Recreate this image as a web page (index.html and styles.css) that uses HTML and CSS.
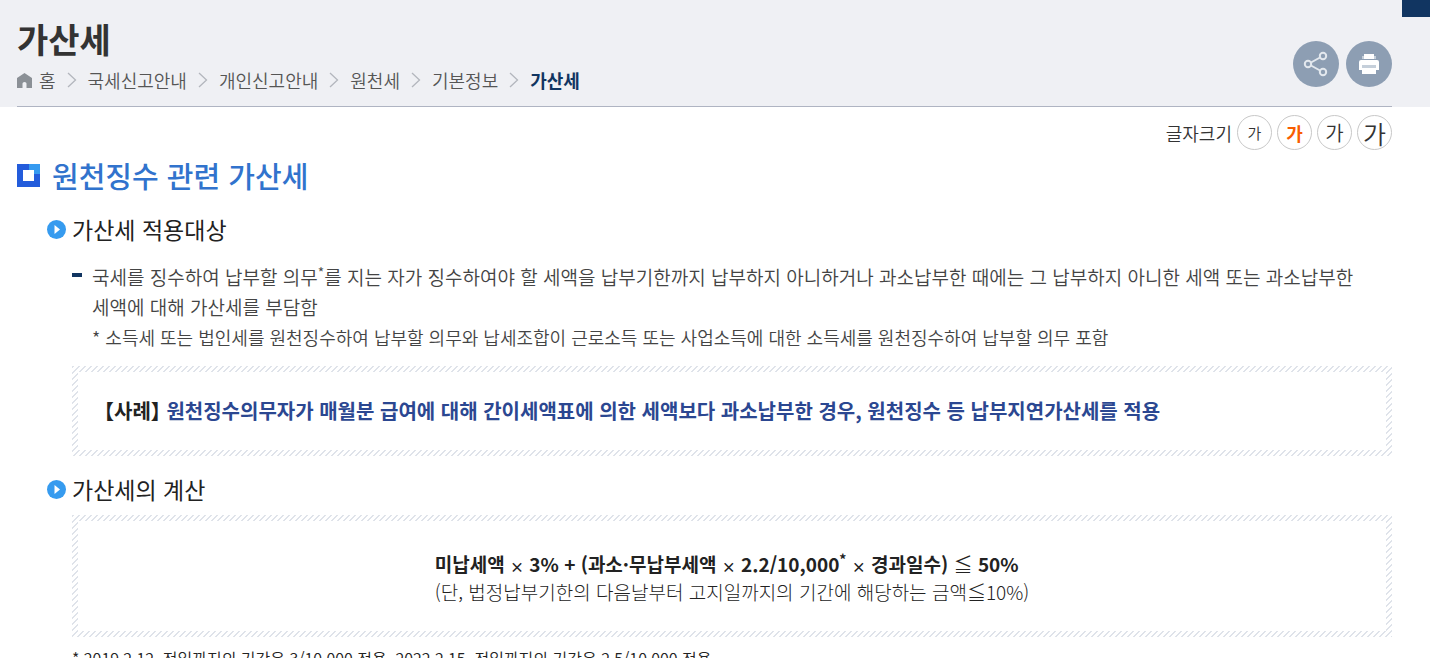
FILE: index.html
```
<!DOCTYPE html>
<html lang="ko">
<head>
<meta charset="utf-8">
<title>가산세</title>
<link rel="stylesheet" href="styles.css">
</head>
<body>
<header class="page-head">
  <div class="head-inner">
    <div class="head-text">
      <h1 class="page-title">가산세</h1>
      <nav class="crumbs" aria-label="현재 위치">
        <svg class="home" width="15" height="15" viewBox="0 0 15 15" aria-hidden="true"><path fill="#8b9096" d="M7.500 0 15 5v10H9.500v-4.500Q9.500 9 7.500 9T5.500 10.500V15H0V5z"/></svg>
        <a href="#">홈</a>
        <svg class="sep" width="10" height="16" viewBox="0 0 10 16" aria-hidden="true"><path d="M1 1l7.500 7L1 15"/></svg>
        <a href="#">국세신고안내</a>
        <svg class="sep" width="10" height="16" viewBox="0 0 10 16" aria-hidden="true"><path d="M1 1l7.500 7L1 15"/></svg>
        <a href="#">개인신고안내</a>
        <svg class="sep" width="10" height="16" viewBox="0 0 10 16" aria-hidden="true"><path d="M1 1l7.500 7L1 15"/></svg>
        <a href="#">원천세</a>
        <svg class="sep" width="10" height="16" viewBox="0 0 10 16" aria-hidden="true"><path d="M1 1l7.500 7L1 15"/></svg>
        <a href="#">기본정보</a>
        <svg class="sep" width="10" height="16" viewBox="0 0 10 16" aria-hidden="true"><path d="M1 1l7.500 7L1 15"/></svg>
        <a href="#" class="current" aria-current="page">가산세</a>
      </nav>
    </div>
    <div class="tools">
      <button class="tool" type="button" aria-label="공유">
        <svg width="46" height="46" viewBox="0 0 46 46" fill="none" stroke="#e3e8ee"><path stroke-width="2" d="M18 21.500l9-5M18 24.500l9 5"/><circle cx="15" cy="23" r="3.200" stroke-width="2"/><circle cx="30" cy="15" r="3.200" stroke-width="2"/><circle cx="30" cy="31" r="3.200" stroke-width="2"/></svg>
      </button>
      <button class="tool" type="button" aria-label="인쇄">
        <svg width="46" height="46" viewBox="0 0 46 46"><path fill="#fff" d="M18 13h10v5H18z"/><path fill="#fff" d="M15 19h16q2 0 2 2v8h-3v-5H16v5h-3v-8q0-2 2-2z"/><path fill="#c5cfda" d="M16 24h14v3H16zM16 15h2v3h-2zM28 15h2v3h-2z"/><path fill="#fff" d="M16 27h14v6H16z"/></svg>
      </button>
    </div>
  </div>
  <div class="corner"></div>
</header>
<main class="content">
  <div class="sizes" role="group" aria-labelledby="size-label">
    <span id="size-label">글자크기</span>
    <button type="button" class="size small">가</button>
    <button type="button" class="size active" aria-pressed="true">가</button>
    <button type="button" class="size large">가</button>
    <button type="button" class="size huge">가</button>
  </div>
  <h2 class="section-title">
    <svg width="23" height="23" viewBox="0 0 23 23" aria-hidden="true"><path fill="#235cdb" d="M0 0h23v23H0z"/><path fill="#359af0" d="M12 0h11v10H12z"/><path fill="#fff" d="M6 6h11v11H6z"/></svg>
    <span>원천징수 관련 가산세</span>
  </h2>
  <section class="part">
    <h3 class="part-title"><svg width="19" height="19" viewBox="0 0 19 19" aria-hidden="true"><circle cx="9.500" cy="9.500" r="9.500" fill="#369bef"/><path fill="#fff" d="M7.500 5l5.500 4.500-5.500 4.500z"/></svg>가산세 적용대상</h3>
    <div class="part-body">
      <ul class="dashes">
        <li>국세를 징수하여 납부할 의무<sup>*</sup>를 지는 자가 징수하여야 할 세액을 납부기한까지 납부하지 아니하거나 과소납부한 때에는 그 납부하지 아니한 세액 또는 과소납부한 세액에 대해 가산세를 부담함
          <p class="note">* 소득세 또는 법인세를 원천징수하여 납부할 의무와 납세조합이 근로소득 또는 사업소득에 대한 소득세를 원천징수하여 납부할 의무 포함</p>
        </li>
      </ul>
      <div class="frame"><p class="case"><span class="tag">【사례】</span> 원천징수의무자가 매월분 급여에 대해 간이세액표에 의한 세액보다 과소납부한 경우, 원천징수 등 납부지연가산세를 적용</p></div>
    </div>
  </section>
  <section class="part">
    <h3 class="part-title"><svg width="19" height="19" viewBox="0 0 19 19" aria-hidden="true"><circle cx="9.500" cy="9.500" r="9.500" fill="#369bef"/><path fill="#fff" d="M7.500 5l5.500 4.500-5.500 4.500z"/></svg>가산세의 계산</h3>
    <div class="part-body">
      <div class="frame tall"><div class="formula"><p><strong>미납세액 <span class="times">×</span> 3% + (과소·무납부세액 <span class="times">×</span> 2.2/10,000<sup>*</sup> <span class="times">×</span> 경과일수) </strong>≦<strong> 50%</strong></p><p class="proviso">(단, 법정납부기한의 다음날부터 고지일까지의 기간에 해당하는 금액≦10%)</p></div></div>
      <p class="footnote">* 2019.2.12. 전일까지의 기간은 3/10,000 적용, 2022.2.15. 전일까지의 기간은 2.5/10,000 적용</p>
    </div>
  </section>
</main>
</body>
</html>
```
FILE: styles.css
```
* { box-sizing: border-box; }
html { overflow: hidden; }
body {
  margin: 0;
  background: #fff;
  color: #222;
  font: 350 18px/26px "Noto Sans CJK KR", sans-serif;
  word-break: keep-all;
}
h1, h2, h3, p, ul { margin: 0; padding: 0; }
a { color: inherit; text-decoration: none; }
svg { display: block; flex: none; }
button { padding: 0; font: inherit; cursor: pointer; }
sup { font-size: 14px; line-height: 0; }
strong { font-weight: 700; }

.page-head { position: relative; background: #eff0f4; padding: 0 38px 0 17px; }
.head-inner {
  display: flex;
  justify-content: space-between;
  align-items: flex-end;
  padding-top: 19px;
  border-bottom: 1px solid #afb4c2;
}
.page-title { font-size: 34px; line-height: 40px; font-weight: 700; color: #333; }
.crumbs { display: flex; align-items: center; gap: 11px; padding: 8px 0 13px; color: #555; }
.home { margin-right: -4px; }
.sep { fill: none; stroke: #b3b6bd; stroke-width: 1.3; }
.current { font-weight: 700; color: #113561; }
.tools { display: flex; gap: 7px; padding-bottom: 19px; }
.tool { width: 46px; height: 46px; border: 0; border-radius: 50%; background: #8d9eb3; }
.corner { position: absolute; top: 0; right: 0; width: 28px; height: 17px; background: #113561; }

.content { padding: 8px 38px 0 17px; }
.sizes { display: flex; justify-content: flex-end; align-items: center; gap: 5px; color: #333; }
.size {
  width: 35px;
  height: 35px;
  border: 1px solid #c8c8c8;
  border-radius: 50%;
  background: #fff;
  color: #333;
  line-height: 28px;
}
.size.small { font-size: 15px; }
.size.active { font-weight: 700; color: #f95d00; }
.size.large { font-size: 20px; }
.size.huge { font-size: 25px; }

.section-title {
  display: flex;
  align-items: center;
  gap: 12px;
  padding-top: 4px;
  color: #3173cd;
  font-size: 29px;
  line-height: 42px;
  font-weight: 500;
}
.part { padding-left: 30px; }
.part-title {
  display: flex;
  align-items: center;
  gap: 6px;
  padding-top: 13px;
  font-size: 23px;
  line-height: 40px;
  font-weight: 400;
}
.part-body { padding-left: 25px; }
.dashes { list-style: none; padding-top: 13px; color: #444; font-size: 19px; line-height: 30px; }
.dashes li { position: relative; padding-left: 20px; }
.dashes li::before {
  content: "";
  position: absolute;
  left: 0;
  top: 11px;
  width: 10px;
  height: 4px;
  background: #113561;
}
.note { font-size: 18px; }
.frame {
  margin-top: 14px;
  padding: 6px;
  background: linear-gradient(135deg, #dfe3ea 23%, #fff 25% 50%, #dfe3ea 52% 73%, #fff 75%) 0 0 / 6px 6px;
}
.case { background: #fff; padding: 26px 20px 26px 26px; color: #2b4791; font-weight: 600; font-size: 20px; }
.tag { color: #222; font-feature-settings: "halt"; }
.frame.tall { margin-top: 6px; }
.formula { display: grid; justify-content: center; background: #fff; padding: 30px 0 26px; font-size: 19px; }
.times { font-size: 14px; }
.proviso { font-weight: 300; }
.footnote { padding-top: 8px; font-size: 16px; }
```
